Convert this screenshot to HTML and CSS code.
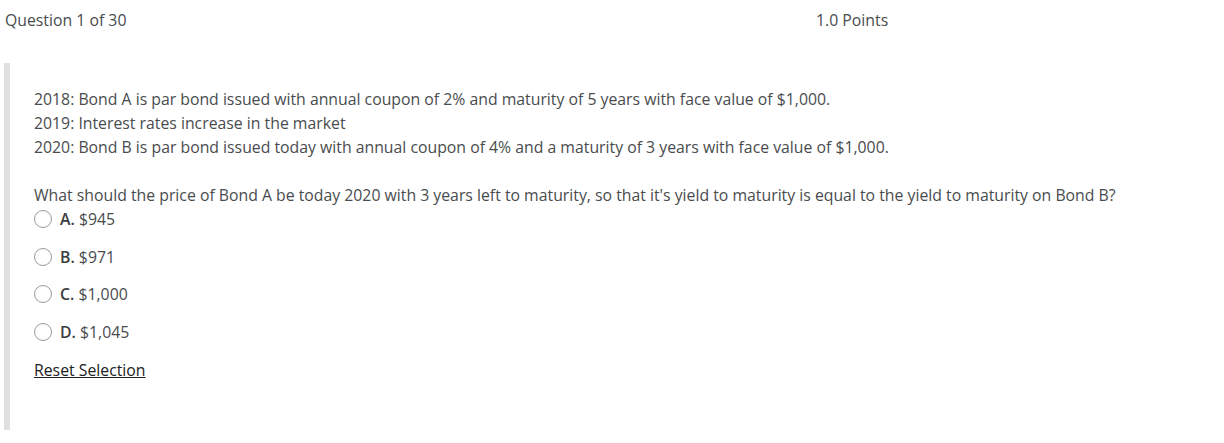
FILE: index.html
```html
<!DOCTYPE html>
<html>
<head>
<meta charset="utf-8">
<link rel="stylesheet" href="styles.css">
</head>
<body>
<div class="header">
  <div class="qnum">Question 1 of 30</div>
  <div class="points">1.0 Points</div>
</div>
<div class="question">
  <div class="stem">
    <div class="line">2018: Bond A is par bond issued with annual coupon of 2% and maturity of 5 years with face value of $1,000.</div>
    <div class="line">2019: Interest rates increase in the market</div>
    <div class="line">2020: Bond B is par bond issued today with annual coupon of 4% and a maturity of 3 years with face value of $1,000.</div>
  </div>
  <div class="prompt">What should the price of Bond A be today 2020 with 3 years left to maturity, so that it's yield to maturity is equal to the yield to maturity on Bond B?</div>
  <div class="options">
    <label class="option"><span class="radio"></span><b>A.</b>&nbsp;$945</label>
    <label class="option"><span class="radio"></span><b>B.</b>&nbsp;$971</label>
    <label class="option"><span class="radio"></span><b>C.</b>&nbsp;$1,000</label>
    <label class="option"><span class="radio"></span><b>D.</b>&nbsp;$1,045</label>
  </div>
  <a class="reset" href="#">Reset Selection</a>
</div>
</body>
</html>
```
FILE: styles.css
```css
html, body {
  margin: 0;
  padding: 0;
  background: #fff;
}
body {
  font-family: "Open Sans", "Liberation Sans", sans-serif;
  font-size: 15.8px;
  color: #494c4e;
}
.header {
  display: flex;
  height: 39px;
  align-items: center;
  padding-left: 5px;
}
.qnum {
  width: 811px;
}
.question {
  margin: 24px 0 0 4px;
  border-left: 6px solid #e0e0e0;
  padding: 24px 0 0 24px;
  height: 343px;
}
.stem .line {
  line-height: 24px;
}
.prompt {
  margin-top: 24px;
  line-height: 24px;
}
.options {
  display: flex;
  flex-direction: column;
  gap: 13.7px;
}
.option {
  display: flex;
  align-items: center;
  height: 24px;
}
.option b {
  font-weight: 600;
  color: #3a3c3e;
}
.radio {
  border: 1px solid #9a9a9a;
  border-radius: 50%;
  margin-right: 8px;
  box-sizing: border-box;
  flex: none;
  width: 18px;
  height: 18px;
}
.reset {
  display: inline-block;
  margin-top: 13.7px;
  line-height: 24px;
  color: #202122;
  text-decoration: underline;
}
```
